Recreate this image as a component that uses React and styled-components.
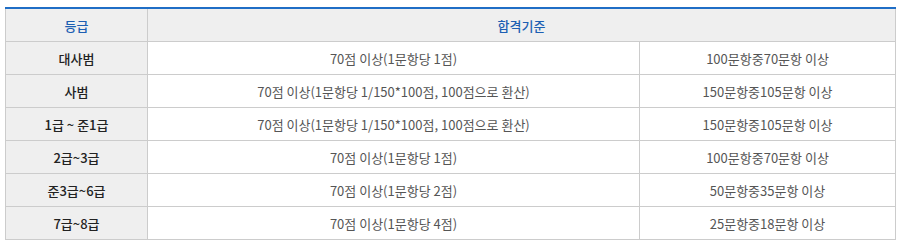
import React from "react"
import styled, { createGlobalStyle } from "styled-components"

const GlobalStyle = createGlobalStyle`
body {
  margin: 0;
  background: #fff;
  font-family: "Malgun Gothic", "Noto Sans CJK KR", "Noto Sans", sans-serif;
}
`

const Wrapper = styled.div`
padding: 7px 0 0 5px;
`

const Table = styled.table`
width: 890px;
border-collapse: collapse;
table-layout: fixed;
border-top: 2px solid #1f6ec6;
font-size: 13px;
letter-spacing: 0;
`

const HeadCell = styled.th`
height: 32px;
padding: 0;
background: #efefef;
border: 1px solid #cccccc;
border-top: none;
color: #1d5fb3;
font-weight: 500;
text-align: center;
`

const GradeCell = styled.td`
height: 32px;
padding: 0;
background: #efefef;
border: 1px solid #cccccc;
color: #222;
font-weight: 500;
text-align: center;
`

const Cell = styled.td`
height: 32px;
padding: 0;
border: 1px solid #cccccc;
color: #555;
text-align: center;
`

const rows = [
  { grade: "대사범", rule: "70점 이상(1문항당 1점)", count: "100문항중70문항 이상" },
  { grade: "사범", rule: "70점 이상(1문항당 1/150*100점, 100점으로 환산)", count: "150문항중105문항 이상" },
  { grade: "1급 ~ 준1급", rule: "70점 이상(1문항당 1/150*100점, 100점으로 환산)", count: "150문항중105문항 이상" },
  { grade: "2급~3급", rule: "70점 이상(1문항당 1점)", count: "100문항중70문항 이상" },
  { grade: "준3급~6급", rule: "70점 이상(1문항당 2점)", count: "50문항중35문항 이상" },
  { grade: "7급~8급", rule: "70점 이상(1문항당 4점)", count: "25문항중18문항 이상" },
]

export default function App() {
  return (
    <Wrapper>
      <GlobalStyle />
      <Table>
        <colgroup>
          <col style={{ width: "142px" }} />
          <col style={{ width: "492px" }} />
          <col style={{ width: "256px" }} />
        </colgroup>
        <thead>
          <tr>
            <HeadCell>등급</HeadCell>
            <HeadCell colSpan={2}>합격기준</HeadCell>
          </tr>
        </thead>
        <tbody>
          {rows.map(({ grade, rule, count }) => (
            <tr key={grade}>
              <GradeCell>{grade}</GradeCell>
              <Cell>{rule}</Cell>
              <Cell>{count}</Cell>
            </tr>
          ))}
        </tbody>
      </Table>
    </Wrapper>
  )
}
